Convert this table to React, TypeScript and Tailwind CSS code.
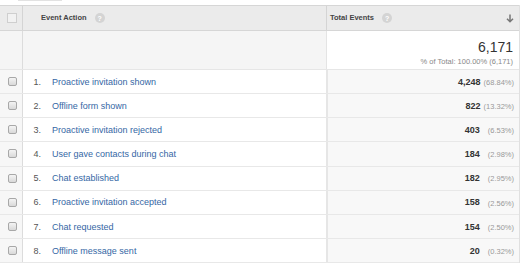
import React from "react";

const rows = [
  { n: 1, name: "Proactive invitation shown", v: "4,248", p: "(68.84%)" },
  { n: 2, name: "Offline form shown", v: "822", p: "(13.32%)" },
  { n: 3, name: "Proactive invitation rejected", v: "403", p: "(6.53%)" },
  { n: 4, name: "User gave contacts during chat", v: "184", p: "(2.98%)" },
  { n: 5, name: "Chat established", v: "182", p: "(2.95%)" },
  { n: 6, name: "Proactive invitation accepted", v: "158", p: "(2.56%)" },
  { n: 7, name: "Chat requested", v: "154", p: "(2.50%)" },
  { n: 8, name: "Offline message sent", v: "20", p: "(0.32%)" },
];

function Help() {
  return (
    <span className="ml-[8px] inline-flex h-[10px] w-[10px] items-center justify-center rounded-full bg-[#d4d4d4] text-[7px] font-bold leading-none text-white">
      ?
    </span>
  );
}

function RowCheck() {
  return (
    <span className="block h-[9px] w-[9px] rounded-[2px] border border-[#a8a8a8] bg-gradient-to-b from-[#f4f4f4] to-[#d9d9d9]" />
  );
}

export default function App() {
  return (
    <div
      className="h-[268px] w-[521px] bg-white text-[#333]"
      style={{ fontFamily: '"Liberation Sans", Arial, sans-serif' }}
    >
      <div className="h-[5px] w-full">
        <div className="ml-[18px] h-[1px] w-[44px] bg-[#e2e2e2]" />
      </div>
      <div className="w-[520px] border-r border-[#e0e0e0]">
        {/* header */}
        <div className="flex h-[26px] border-y border-[#d6d6d6] bg-[#ebebeb]">
          <div className="flex w-[23px] items-center justify-center border-r border-[#d4d4d4] pl-[2px]">
            <span className="block h-[10px] w-[10px] border border-[#cfcfcf] bg-[#f2f2f2]" />
          </div>
          <div className="flex flex-1 items-center pl-[18px] text-[7.5px] font-bold text-[#444]">
            Event Action
            <Help />
          </div>
          <div className="flex w-[193px] items-center border-l border-[#d4d4d4] pl-[3px] pr-[5px] text-[7.5px] font-bold text-[#444]">
            Total Events
            <Help />
            <svg className="ml-auto" width="8" height="9" viewBox="0 0 8 9">
              <path d="M4 0.5 V7.5 M1 4.8 L4 7.8 L7 4.8" stroke="#777" strokeWidth="1.5" fill="none" />
            </svg>
          </div>
        </div>
        {/* summary */}
        <div className="flex h-[39px] border-b border-[#e6e6e6]">
          <div className="w-[23px] border-r border-[#dcdcdc] bg-[#f5f5f5]" />
          <div className="flex-1 bg-[#f5f5f5]" />
          <div className="flex w-[193px] flex-col items-end border-l border-[#e4e4e4] bg-white pr-[6px] pt-[8px]">
            <div className="text-[14px] leading-[16px] text-[#333]">6,171</div>
            <div className="mt-[2px] text-[7.5px] leading-[9px] text-[#888]">
              % of Total: 100.00% (6,171)
            </div>
          </div>
        </div>
        {/* rows */}
        {rows.map((r) => (
          <div key={r.n} className="flex h-[24.125px] border-b border-[#e8e8e8]">
            <div className="flex w-[23px] items-center justify-center border-r border-[#dcdcdc] bg-[#f7f7f7] pl-[2px]">
              <RowCheck />
            </div>
            <div className="flex flex-1 items-center bg-white pt-[2px] text-[9px]">
              <span className="w-[18px] text-right text-[#555]">{r.n}.</span>
              <span className="ml-[11px] text-[#3567a5]">{r.name}</span>
            </div>
            <div className="flex w-[193px] items-center justify-end border-l-2 border-[#e6e6e6] bg-[#f8f8f8] pr-[5px] pt-[2px]">
              <span className="text-[9px] font-bold text-[#333]">{r.v}</span>
              <span
                className={
                  (r.p.length > 7 ? "ml-[3px]" : "ml-[8px]") +
                  " text-[7.5px] text-[#999]"
                }
              >
                {r.p}
              </span>
            </div>
          </div>
        ))}
      </div>
    </div>
  );
}
